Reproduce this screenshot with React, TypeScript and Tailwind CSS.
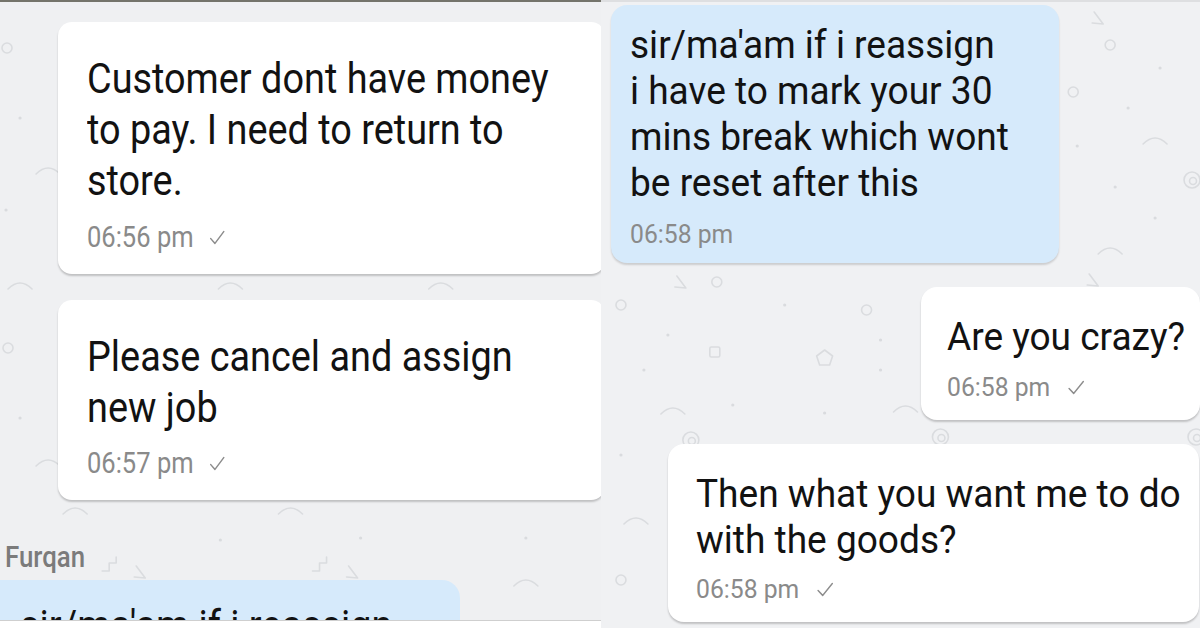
import React from "react";

type Doodle = { t: "c" | "d" | "a" | "s" | "p" | "tr" | "z" | "sp"; x: number; y: number };

const leftDoodles: Doodle[] = [
    { t: "c", x: 7, y: 48 },
    { t: "d", x: 20, y: 118 },
    { t: "a", x: 48, y: 170 },
    { t: "d", x: 6, y: 210 },
    { t: "a", x: 20, y: 285 },
    { t: "a", x: 230, y: 285 },
    { t: "a", x: 440, y: 285 },
    { t: "c", x: 8, y: 348 },
    { t: "d", x: 20, y: 418 },
    { t: "a", x: 48, y: 462 },
    { t: "a", x: 75, y: 510 },
    { t: "a", x: 290, y: 510 },
    { t: "d", x: 220, y: 540 },
    { t: "d", x: 360, y: 538 },
    { t: "d", x: 525, y: 538 },
    { t: "z", x: 112, y: 565 },
    { t: "z", x: 322, y: 565 },
    { t: "tr", x: 140, y: 572 },
    { t: "tr", x: 352, y: 572 },
    { t: "a", x: 525, y: 582 },
    { t: "c", x: 590, y: 32 },
    { t: "c", x: 588, y: 410 },
];

const rightDoodles: Doodle[] = [
    { t: "tr", x: 1098, y: 18 },
    { t: "c", x: 1110, y: 45 },
    { t: "c", x: 1073, y: 92 },
    { t: "d", x: 1160, y: 68 },
    { t: "d", x: 1128, y: 108 },
    { t: "a", x: 1155, y: 140 },
    { t: "d", x: 1077, y: 146 },
    { t: "sp", x: 1192, y: 180 },
    { t: "d", x: 1115, y: 187 },
    { t: "d", x: 1155, y: 218 },
    { t: "a", x: 1110, y: 250 },
    { t: "tr", x: 1093, y: 280 },
    { t: "c", x: 716, y: 282 },
    { t: "tr", x: 680, y: 282 },
    { t: "c", x: 620, y: 305 },
    { t: "d", x: 667, y: 335 },
    { t: "d", x: 784, y: 305 },
    { t: "c", x: 866, y: 310 },
    { t: "s", x: 714, y: 352 },
    { t: "d", x: 643, y: 370 },
    { t: "p", x: 824, y: 358 },
    { t: "d", x: 880, y: 340 },
    { t: "d", x: 880, y: 370 },
    { t: "a", x: 672, y: 410 },
    { t: "d", x: 732, y: 405 },
    { t: "d", x: 824, y: 413 },
    { t: "a", x: 905, y: 408 },
    { t: "sp", x: 690, y: 440 },
    { t: "sp", x: 940, y: 437 },
    { t: "sp", x: 1196, y: 437 },
    { t: "d", x: 620, y: 455 },
    { t: "a", x: 635, y: 520 },
    { t: "c", x: 620, y: 580 },
];

function DoodleShape({ d }: { d: Doodle }) {
    const { x, y } = d;
    switch (d.t) {
        case "c":
            return <circle cx={x} cy={y} r={5} />;
        case "d":
            return <circle cx={x} cy={y} r={1.6} fill="#d9dbde" stroke="none" />;
        case "a":
            return <path d={`M${x - 12} ${y + 4} Q${x} ${y - 8} ${x + 12} ${y + 4}`} />;
        case "s":
            return <rect x={x - 5} y={y - 5} width={10} height={10} rx={1.5} />;
        case "p":
            return <path d={`M${x} ${y - 8} L${x + 8} ${y - 2} L${x + 5} ${y + 7} L${x - 5} ${y + 7} L${x - 8} ${y - 2} Z`} />;
        case "tr":
            return <path d={`M${x - 4} ${y - 6} L${x + 5} ${y + 6} L${x - 6} ${y + 5}`} />;
        case "z":
            return <path d={`M${x - 10} ${y + 6} L${x - 3} ${y + 6} L${x - 3} ${y - 2} L${x + 4} ${y - 2} L${x + 4} ${y - 8}`} />;
        case "sp":
            return (
                <g>
                    <circle cx={x} cy={y} r={8} />
                    <circle cx={x + 1} cy={y + 1} r={3.5} />
                </g>
            );
    }
}

function Doodles({ items, offset }: { items: Doodle[]; offset: number }) {
    return (
        <svg className="pointer-events-none absolute inset-0 h-full w-full" viewBox={`${offset} 0 600 628`} preserveAspectRatio="none">
            <g fill="none" stroke="#dadcdf" strokeWidth={1.6} strokeLinecap="round" strokeLinejoin="round">
                {items.map((d, i) => (
                    <DoodleShape key={i} d={d} />
                ))}
            </g>
        </svg>
    );
}

function Check({ className }: { className: string }) {
    return (
        <svg className={className} viewBox="0 0 18 14" fill="none" stroke="#8d8d8d" strokeWidth={1.4} strokeLinecap="round" strokeLinejoin="round">
            <path d="M2 8 L6.5 12.5 L16 1.5" />
        </svg>
    );
}

export default function App() {
    return (
        <div className="flex h-[628px] w-[1200px] overflow-hidden bg-white font-['Roboto',sans-serif] text-[#121212]">
            {/* left screenshot */}
            <div className="relative flex h-full w-[601px] shrink-0 flex-col overflow-hidden bg-[#eff0f2]">
                <Doodles items={leftDoodles} offset={0} />
                <div className="relative h-[2px] shrink-0 bg-[#74746b]" />
                <div className="relative flex min-h-0 flex-1 flex-col overflow-hidden">
                    <div className="ml-[58px] mt-[20px] h-[252px] w-[547px] shrink-0 rounded-[14px] bg-white pl-[29px] pt-[31px] shadow-[0_2px_2px_rgba(0,0,0,0.2)]">
                        <div className="origin-left scale-x-[0.88] text-[43px] leading-[51px]">
                            <div className="whitespace-nowrap">Customer dont have money</div>
                            <div className="whitespace-nowrap">to pay. I need to return to</div>
                            <div className="whitespace-nowrap">store.</div>
                        </div>
                        <div className="mt-[15px] flex origin-left scale-x-[0.88] items-center gap-[17px] text-[29px] leading-[32px] text-[#8a8a8a]">
                            <span className="whitespace-nowrap">06:56 pm</span>
                            <Check className="h-[15px] w-[20px]" />
                        </div>
                    </div>

                    <div className="ml-[58px] mt-[26px] h-[200px] w-[547px] shrink-0 rounded-[14px] bg-white pl-[29px] pt-[31px] shadow-[0_2px_2px_rgba(0,0,0,0.2)]">
                        <div className="origin-left scale-x-[0.88] text-[43px] leading-[51px]">
                            <div className="whitespace-nowrap">Please cancel and assign</div>
                            <div className="whitespace-nowrap">new job</div>
                        </div>
                        <div className="mt-[14px] flex origin-left scale-x-[0.88] items-center gap-[17px] text-[29px] leading-[32px] text-[#8a8a8a]">
                            <span className="whitespace-nowrap">06:57 pm</span>
                            <Check className="h-[15px] w-[20px]" />
                        </div>
                    </div>

                    <div className="ml-[5px] mt-[40px] shrink-0 origin-left scale-x-[0.86] whitespace-nowrap text-[30px] font-medium leading-[33px] text-[#7b7b7b]">
                        Furqan
                    </div>

                    <div className="mt-[7px] h-[80px] w-[460px] shrink-0 rounded-tr-[18px] bg-[#d6eafb] pl-[20px] pt-[20px]">
                        <div className="origin-left scale-x-[0.88] whitespace-nowrap text-[43px] leading-[51px]">
                            sir/ma'am if i reassign
                        </div>
                    </div>
                </div>
                <div className="relative h-[8px] shrink-0 border-t border-[#cfcfcf] bg-white" />
            </div>

            {/* right screenshot */}
            <div className="relative flex h-full flex-1 flex-col overflow-hidden bg-[#f0f1f3]">
                <Doodles items={rightDoodles} offset={600} />
                <div className="relative h-[2px] shrink-0 bg-[#dedfe1]" />
                <div className="relative ml-[10px] mt-[3px] h-[258px] w-[448px] shrink-0 rounded-[16px] bg-[#d6eafb] pl-[19px] pt-[17px] shadow-[0_2px_2px_rgba(0,0,0,0.15)]">
                    <div className="origin-left scale-x-[0.95] text-[39px] leading-[46px]">
                        <div className="whitespace-nowrap">sir/ma'am if i reassign</div>
                        <div className="whitespace-nowrap">i have to mark your 30</div>
                        <div className="whitespace-nowrap">mins break which wont</div>
                        <div className="whitespace-nowrap">be reset after this</div>
                    </div>
                    <div className="mt-[13px] origin-left scale-x-[0.95] whitespace-nowrap text-[26px] leading-[30px] text-[#8a8a8a]">
                        06:58 pm
                    </div>
                </div>

                <div className="relative ml-auto mt-[24px] h-[133px] w-[279px] shrink-0 rounded-[16px] bg-white pl-[26px] pt-[27px] shadow-[0_2px_2px_rgba(0,0,0,0.2)]">
                    <div className="origin-left scale-x-[0.95] whitespace-nowrap text-[39px] leading-[47px]">Are you crazy?</div>
                    <div className="mt-[11px] flex origin-left scale-x-[0.95] items-center gap-[17px] text-[26px] leading-[30px] text-[#8a8a8a]">
                        <span className="whitespace-nowrap">06:58 pm</span>
                        <Check className="h-[15px] w-[20px]" />
                    </div>
                </div>

                <div className="relative ml-auto mr-[1px] mt-[24px] h-[178px] w-[531px] shrink-0 rounded-[16px] bg-white pl-[28px] pt-[27px] shadow-[0_2px_2px_rgba(0,0,0,0.2)]">
                    <div className="origin-left scale-x-[0.95] text-[39px] leading-[46px]">
                        <div className="whitespace-nowrap">Then what you want me to do</div>
                        <div className="whitespace-nowrap">with the goods?</div>
                    </div>
                    <div className="mt-[11px] flex origin-left scale-x-[0.95] items-center gap-[17px] text-[26px] leading-[30px] text-[#8a8a8a]">
                        <span className="whitespace-nowrap">06:58 pm</span>
                        <Check className="h-[15px] w-[20px]" />
                    </div>
                </div>
            </div>
        </div>
    );
}
